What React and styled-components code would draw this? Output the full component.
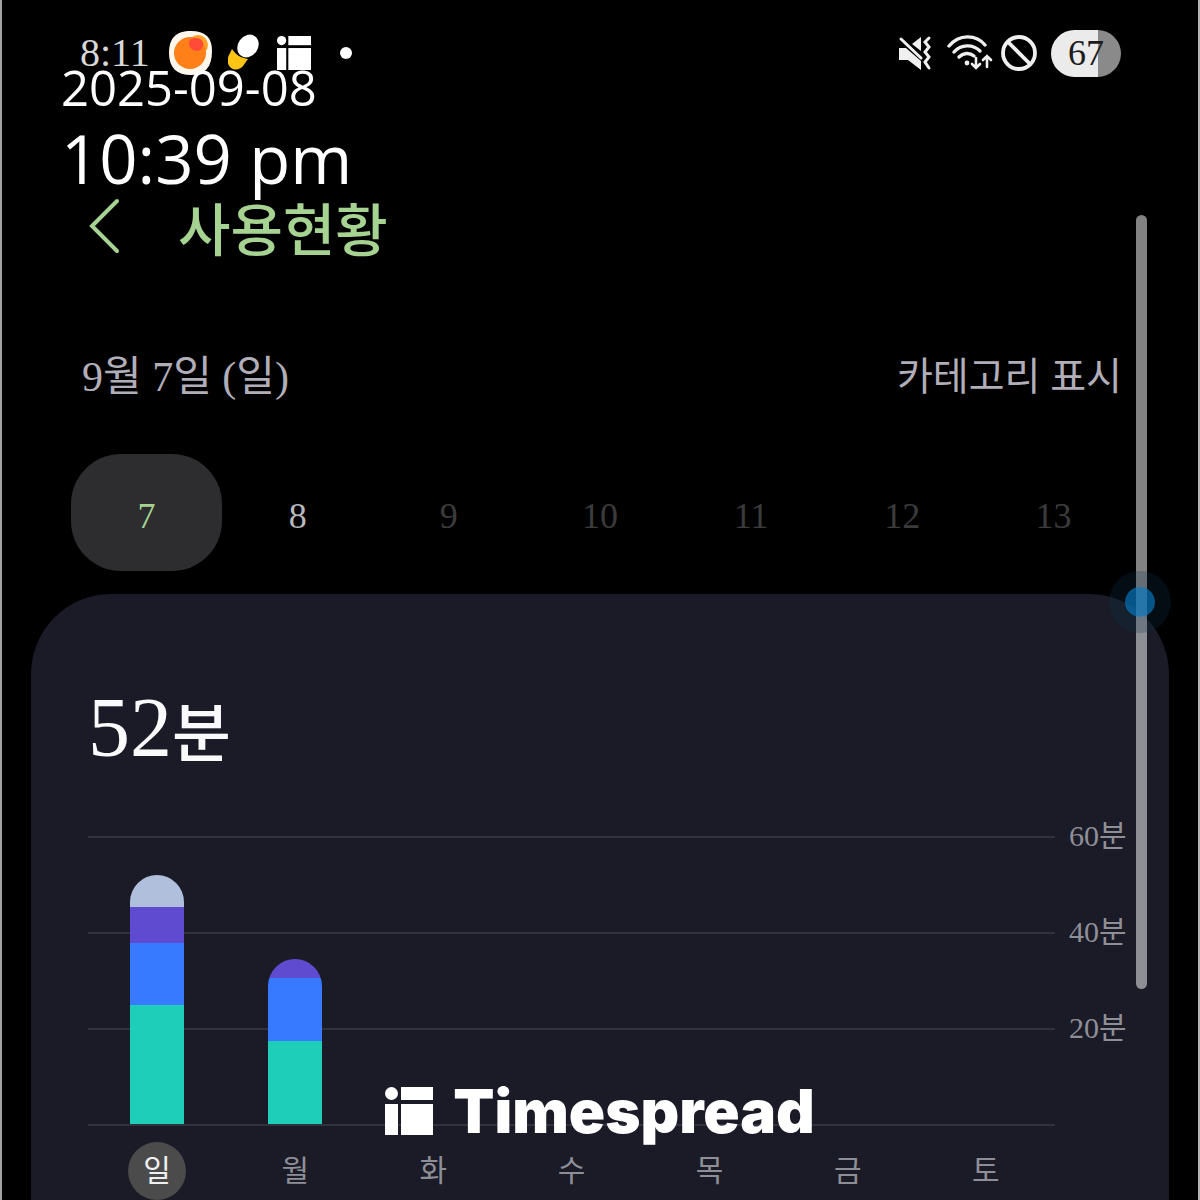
import React from "react";
import styled, { createGlobalStyle } from "styled-components";

const GlobalStyle = createGlobalStyle`
* {
    box-sizing: border-box;
}

body {
    margin: 0;
    background: #000000;
    font-family: "Liberation Serif", "Noto Sans CJK KR", serif;
}
`;

const Page = styled.main`
position: relative;
display: flex;
flex-direction: column;
min-height: 100vh;
overflow: hidden;
padding-top: 29px;
border-left: 2px solid #a4a4a4;
border-right: 2px solid #b4b4b4;
background: #000000;
color: #b1aeb9;
`;

const StatusBar = styled.div`
display: flex;
align-items: center;
justify-content: space-between;
height: 48px;
padding: 0 77px 0 78px;
`;

const StatusGroup = styled.div`
display: flex;
align-items: center;
gap: ${(props) => props.$gap}px;
`;

const Clock = styled.span`
margin-right: 4px;
font-size: 40px;
line-height: 48px;
color: #d8d8d8;
`;

const Battery = styled.span`
width: 70px;
height: 47px;
margin-left: 6px;
border-radius: 24px;
background: linear-gradient(to right, #ebebeb 67%, #8a8a8a 67%);
color: #1c1c1c;
font-size: 36px;
line-height: 47px;
text-align: center;
`;

const Header = styled.header`
display: flex;
align-items: center;
gap: 57px;
height: 64px;
margin-top: 117px;
padding: 0 86px;
color: #a6d392;
`;

const BackButton = styled.button`
display: flex;
padding: 0;
border: 0;
background: none;
color: inherit;
`;

const Title = styled.h1`
margin: 0;
padding-top: 12px;
font-size: 57px;
font-weight: 500;
line-height: 64px;
`;

const DateRow = styled.div`
display: flex;
align-items: center;
justify-content: space-between;
height: 48px;
margin-top: 95px;
padding: 0 76px 0 80px;
`;

const CurrentDate = styled.span`
font-size: 42px;
line-height: 48px;
`;

const CategoryButton = styled.button`
padding: 0;
border: 0;
background: none;
color: inherit;
font-family: inherit;
font-size: 39px;
line-height: 48px;
`;

const Days = styled.nav`
display: grid;
grid-template-columns: repeat(7, 1fr);
margin-top: 53px;
padding: 0 69px;
`;

const dayColors = {
    selected: "#a6d392",
    past: "#b9b9bd",
    future: "#3b3b3b"
};

const DayButton = styled.button`
height: 117px;
padding: 6px 0 0;
border: 0;
border-radius: 50px;
background: ${(props) => (props.$state === "selected" ? "#2d2d2f" : "none")};
color: ${(props) => dayColors[props.$state]};
font-family: inherit;
font-size: 36px;
`;

const Card = styled.section`
flex: 1;
margin: 23px 29px 0;
padding: 86px 42px 0 57px;
border-radius: 80px 80px 0 0;
background: #1a1b26;
`;

const Total = styled.p`
height: 96px;
margin: 0;
font-size: 84px;
line-height: 96px;
color: #fafafc;
`;

const Unit = styled.span`
font-size: 64px;
font-weight: 500;
line-height: 64px;
`;

const Chart = styled.div`
display: grid;
margin-top: 60px;
`;

const GridLines = styled.div`
grid-area: 1 / 1;
`;

const GridRow = styled.div`
display: flex;
gap: 14px;
height: ${(props) => (props.$last ? 2 : 96)}px;
`;

const Line = styled.div`
flex: 1;
height: 2px;
background: #30323c;
`;

const Tick = styled.span`
width: 58px;
margin-top: -20px;
font-size: 30px;
line-height: 40px;
color: #8e8e97;
`;

const Bars = styled.div`
grid-area: 1 / 1;
display: grid;
grid-template-columns: repeat(7, 1fr);
justify-items: center;
align-items: end;
height: 288px;
margin-right: 72px;
`;

const Bar = styled.div`
width: 54px;
overflow: hidden;
border-radius: 27px 27px 0 0;
display: flex;
flex-direction: column;
`;

const Segment = styled.div`
background: ${(props) => props.$color};
`;

const Weekdays = styled.div`
display: grid;
grid-template-columns: repeat(7, 1fr);
justify-items: center;
margin-top: 16px;
margin-right: 72px;
`;

const Weekday = styled.span`
width: 58px;
height: 58px;
border-radius: 50%;
background: ${(props) => (props.$active ? "#4b4b4b" : "none")};
color: ${(props) => (props.$active ? "#f0f0f0" : "#8e8e97")};
font-size: 30px;
line-height: 58px;
text-align: center;
`;

const ScrollThumb = styled.div`
position: absolute;
top: 215px;
right: 51px;
width: 11px;
height: 774px;
border-radius: 6px;
background: rgba(255, 255, 255, 0.51);
`;

const TouchDot = styled.div`
position: absolute;
top: 587px;
right: 43px;
width: 30px;
height: 30px;
border-radius: 50%;
background: rgba(7, 113, 183, 0.75);
box-shadow: 0 0 0 16px rgba(10, 50, 75, 0.25);
`;

const Stamp = styled.div`
position: absolute;
top: 62px;
left: 59px;
color: #ffffff;
font-family: "Open Sans", "Noto Sans", sans-serif;
font-weight: 400;
`;

const StampDate = styled.div`
font-size: 49px;
line-height: 50px;
`;

const StampTime = styled.div`
font-size: 67px;
line-height: 92px;
`;

const Watermark = styled.div`
position: absolute;
left: 0;
right: 0;
bottom: 54px;
display: flex;
align-items: center;
justify-content: center;
gap: 20px;
color: #ffffff;
font-family: Inter, sans-serif;
font-size: 60px;
font-weight: 900;
line-height: 70px;
`;

const LogoMark = ({ size }) => (
    <svg width={size} height={size} viewBox="0 0 48 48" fill="#ffffff" aria-hidden="true">
        <circle cx="6.5" cy="6.5" r="6.5" />
        <rect x="16" y="0" width="32" height="13" />
        <rect x="0" y="17" width="13" height="31" />
        <rect x="16" y="17" width="32" height="31" />
    </svg>
);

const PeachIcon = () => (
    <svg width="44" height="44" viewBox="0 0 44 44" aria-hidden="true">
        <path d="M22 0C36 0 43 6 43 20c0 16-7 24-21 24S0 37 0 22 7 0 22 0Z" fill="#fff6ec" />
        <circle cx="29" cy="14" r="10" fill="#ffa02a" />
        <circle cx="21" cy="22" r="16" fill="#ff8019" />
        <path d="M22 8c5-2 10-1 12 3 1 5-2 9-6 9s-7-3-8-6c0-3 0-5 2-6Z" fill="#ff4b38" />
    </svg>
);

const PillIcon = () => (
    <svg width="34" height="38" viewBox="0 0 34 38" aria-hidden="true">
        <path d="M4 15c4 6 9 9 16 10l-5 7c-3 4-9 5-13 1-3-3-3-8-1-12Z" fill="#fcc414" />
        <ellipse cx="20" cy="12" rx="10" ry="12" transform="rotate(35 20 12)" fill="#ffffff" />
    </svg>
);

const MuteIcon = () => (
    <svg width="41" height="36" viewBox="0 0 41 36" fill="none" stroke="#f0f0f0" strokeWidth="3" strokeLinecap="round" aria-hidden="true">
        <path d="M1 13h7l15 13v9L10 25H1Z" fill="#f0f0f0" stroke="none" />
        <path d="M23 2v14l-9-7Z" fill="#f0f0f0" stroke="none" />
        <path d="M3 4 23 23" />
        <path d="m31 3-4 4 4 5-4 5 4 5-4 5 4 6" />
    </svg>
);

const WifiIcon = () => (
    <svg width="46" height="36" viewBox="0 0 46 36" fill="none" stroke="#f0f0f0" strokeWidth="3.4" strokeLinecap="round" aria-hidden="true">
        <path d="M2 11c10-12 27-12 36-1" />
        <path d="M7 17c7-8 19-8 26-1" />
        <path d="M12 22c4-4 10-5 15-1" />
        <circle cx="20" cy="28" r="2.4" fill="#f0f0f0" stroke="none" />
        <path d="M29 23v10m-4-4 4 4 4-4M40 32V21m-4 4 4-4 4 4" strokeWidth="2.6" />
    </svg>
);

const BlockIcon = () => (
    <svg width="36" height="36" viewBox="0 0 36 36" fill="none" stroke="#f0f0f0" strokeWidth="3.8" aria-hidden="true">
        <circle cx="18" cy="18" r="16" />
        <path d="M7 7 29 29" />
    </svg>
);

const days = [7, 8, 9, 10, 11, 12, 13];
const weekdays = ["일", "월", "화", "수", "목", "금", "토"];
const ticks = [60, 40, 20];
const maxMinutes = 60;

const colors = {
    other: "#b0bfdc",
    purple: "#5f4bcf",
    blue: "#387aff",
    green: "#1fceb8"
};

// minutes per category, top of the bar first
const usage = [
    [["other", 6.7], ["purple", 7.5], ["blue", 13], ["green", 24.7]],
    [["purple", 3.8], ["blue", 13.2], ["green", 17.3]],
    [], [], [], [], []
];

const dayState = (day) => {
    if (day === 7) return "selected";
    return day === 8 ? "past" : "future";
};

const UsageBar = ({ segments }) => {
    const total = segments.reduce((sum, [, minutes]) => sum + minutes, 0);

    return (
        <Bar style={{ height: `${(total / maxMinutes) * 100}%` }}>
            {segments.map(([name, minutes]) => (
                <Segment key={name} $color={colors[name]} style={{ flex: minutes }} />
            ))}
        </Bar>
    );
};

const App = () => {
    return (
        <Page>
            <GlobalStyle />
            <StatusBar>
                <StatusGroup $gap={15}>
                    <Clock>8:11</Clock>
                    <PeachIcon />
                    <PillIcon />
                    <LogoMark size={34} />
                    <svg width="66" height="12" viewBox="0 0 66 12" aria-hidden="true">
                        <circle cx="20" cy="6" r="6" fill="#ffffff" />
                    </svg>
                </StatusGroup>
                <StatusGroup $gap={8}>
                    <MuteIcon />
                    <WifiIcon />
                    <BlockIcon />
                    <Battery>67</Battery>
                </StatusGroup>
            </StatusBar>

            <Header>
                <BackButton aria-label="뒤로">
                    <svg width="33" height="56" viewBox="0 0 33 56" fill="none" stroke="currentColor" strokeWidth="4" strokeLinecap="round" aria-hidden="true">
                        <path d="M29 3 4 28 29 53" />
                    </svg>
                </BackButton>
                <Title>사용현황</Title>
            </Header>

            <DateRow>
                <CurrentDate>9월 7일 (일)</CurrentDate>
                <CategoryButton>카테고리 표시</CategoryButton>
            </DateRow>

            <Days>
                {days.map((day) => (
                    <DayButton key={day} $state={dayState(day)}>{day}</DayButton>
                ))}
            </Days>

            <Card>
                <Total>52<Unit>분</Unit></Total>
                <Chart>
                    <GridLines>
                        {ticks.map((tick) => (
                            <GridRow key={tick}>
                                <Line />
                                <Tick>{tick}분</Tick>
                            </GridRow>
                        ))}
                        <GridRow $last>
                            <Line />
                            <Tick />
                        </GridRow>
                    </GridLines>
                    <Bars>
                        {usage.map((segments, index) => (
                            <UsageBar key={weekdays[index]} segments={segments} />
                        ))}
                    </Bars>
                </Chart>
                <Weekdays>
                    {weekdays.map((name, index) => (
                        <Weekday key={name} $active={index === 0}>{name}</Weekday>
                    ))}
                </Weekdays>
            </Card>

            <Stamp>
                <StampDate>2025-09-08</StampDate>
                <StampTime>10:39 pm</StampTime>
            </Stamp>
            <ScrollThumb />
            <TouchDot />
            <Watermark>
                <LogoMark size={48} />
                Timespread
            </Watermark>
        </Page>
    );
};

export default App;
